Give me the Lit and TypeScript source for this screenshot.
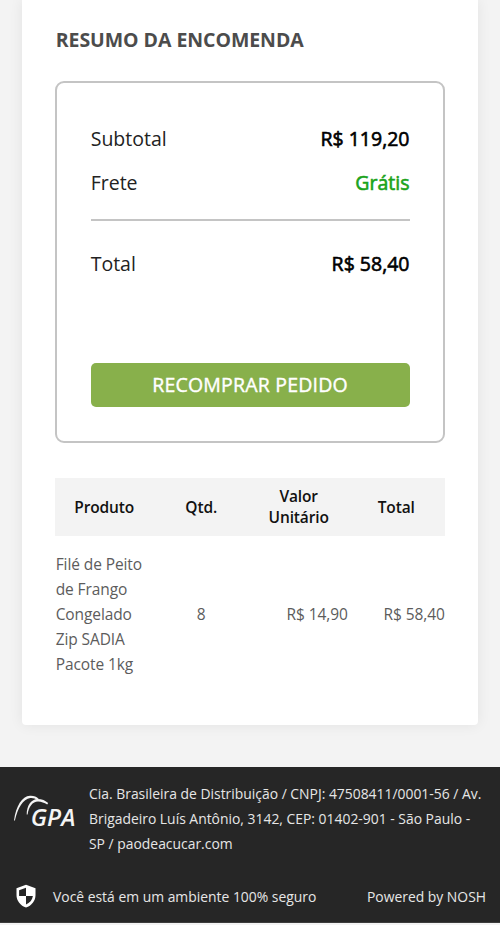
import { LitElement, html, css, svg } from "lit";
import { customElement } from "lit/decorators.js";

const rows = [
  { name: ["Filé de Peito", "de Frango", "Congelado", "Zip SADIA", "Pacote 1kg"], qty: "8", unit: "R$ 14,90", total: "R$ 58,40" },
];

const gpaMark = svg`
  <path d="M0 26.500C2 12 8 2 16 1.700c3.500-.2 6.500.8 8.800 3.200l-1.500 1.300C21.500 4.600 19 3.700 16.300 4 9 4.900 3.800 14 .9 26.500Z"/>
  <path d="M12.700 20.500C12.700 11 17.500 5 23.500 4.900c4.500 0 8 1.500 10.700 4.200l-1 1.500C30.300 8.600 27.500 7.500 24 7.400c-5.500 0-9.300 5.400-10.400 13.100Z"/>
`;

@customElement("order-summary")
export class OrderSummary extends LitElement {
  static styles = css`
    :host { display: block; }
    .box {
      box-sizing: border-box; height: 362px; padding: 33px 33.500px 0 33.700px;
      border: 2px solid #c4c4c4; border-radius: 9px; color: #222; font-size: 19.5px;
    }
    .row { display: flex; justify-content: space-between; align-items: center; height: 44.500px; line-height: 45px; }
    .row:last-of-type { line-height: 44px; }
    .value { color: #000; font-size: 19.500px; -webkit-text-stroke: 0.6px currentColor; }
    .free { color: #1ba31b; }
    .rule { height: 2px; background: #c4c4c4; margin: 14px 0 20.500px; }
    .buy {
      display: block; width: 100%; height: 44px; margin-top: 76.500px; padding: 0; border: 0; border-radius: 5px;
      background: #88b04b; color: #fff; font: 400 19.500px/43px "Open Sans", sans-serif;
      letter-spacing: 0.200px; -webkit-text-stroke: 0.4px #fff;
    }
  `;
  render() {
    return html`<section class="box">
      <div class="row"><span class="label">Subtotal</span><span class="value">R$ 119,20</span></div>
      <div class="row"><span class="label">Frete</span><span class="value free">Grátis</span></div>
      <div class="rule"></div>
      <div class="row"><span class="label">Total</span><span class="value">R$ 58,40</span></div>
      <button class="buy">RECOMPRAR PEDIDO</button>
    </section>`;
  }
}

@customElement("product-table")
export class ProductTable extends LitElement {
  static styles = css`
    :host { display: block; }
    .head, .item { display: grid; grid-template-columns: 97px 97px 98px 97px; align-items: center; }
    .head {
      height: 58px; padding-left: 0.700px; background: #f3f3f3; color: #111; text-align: center;
      font-weight: 600; font-size: 15.500px; line-height: 21px; letter-spacing: -0.120px;
    }
    .item { margin-top: 16px; padding-left: 0.700px; color: #5c5c5c; font-size: 15.500px; line-height: 25px; letter-spacing: -0.100px; }
    .line { display: block; white-space: nowrap; }
    .qty { text-align: center; }
    .money { text-align: right; white-space: nowrap; }
  `;
  render() {
    return html`
      <div class="head"><span>Produto</span><span>Qtd.</span><span>Valor<br />Unitário</span><span>Total</span></div>
      ${rows.map((r) => html`<div class="item">
        <span>${r.name.map((l) => html`<span class="line">${l}</span>`)}</span>
        <span class="qty">${r.qty}</span>
        <span class="money">${r.unit}</span>
        <span class="money">${r.total}</span>
      </div>`)}
    `;
  }
}

@customElement("site-footer")
export class SiteFooter extends LitElement {
  static styles = css`
    :host { display: block; }
    .footer {
      box-sizing: border-box; height: 156px; background: #262626; color: #e6e6e6;
      padding: 14px 14px 0; font-size: 13.900px; line-height: 25px; border-bottom: 1px solid #3c3c3c;
    }
    .company { display: flex; height: 75px; }
    .logo { display: block; flex: none; width: 64px; height: 40px; margin: 13px 11px 0 0; fill: #f4f4f4; }
    .gpa { font: italic 600 24px "Open Sans", sans-serif; }
    .line { display: block; white-space: nowrap; }
    .bottom { display: flex; align-items: center; height: 25px; margin-top: 27.500px; white-space: nowrap; }
    .shield { display: block; width: 20px; height: 24px; margin: 0 17px 0 2px; }
    .powered { margin-left: auto; }
  `;
  render() {
    return html`<footer class="footer">
      <div class="company">
        <svg class="logo" viewBox="0 0 64 40">${gpaMark}<text class="gpa" x="16.800" y="32.300" textLength="44.500" lengthAdjust="spacingAndGlyphs">GPA</text></svg>
        <div>
          <span class="line">Cia. Brasileira de Distribuição / CNPJ: 47508411/0001-56 / Av.</span>
          <span class="line">Brigadeiro Luís Antônio, 3142, CEP: 01402-901 - São Paulo -</span>
          <span class="line">SP / paodeacucar.com</span>
        </div>
      </div>
      <div class="bottom">
        <svg class="shield" viewBox="0 0 20 24">
          <path fill="#fff" d="M10 .7 19.500 4.300V11c0 5.900-4 10.800-9.500 12.500C4.500 21.800.5 16.900.5 11V4.300Z"/>
          <path fill="#262626" d="M10 3.800V12H3.100V6.300Z M10 12h6.900c-.6 4.100-3.200 7-6.900 8.400Z"/>
        </svg>
        <span>Você está em um ambiente 100% seguro</span>
        <span class="powered">Powered by NOSH</span>
      </div>
    </footer>`;
  }
}

@customElement("app-root")
export class AppRoot extends LitElement {
  static styles = css`
    :host { display: block; height: 945px; overflow: hidden; background: #fff; font-family: "Open Sans", sans-serif; }
    .page { box-sizing: border-box; height: 767px; padding: 0 22px; background: #f3f3f3; overflow: hidden; }
    .card {
      box-sizing: border-box; height: 725px; padding: 24px 33px 0; background: #fff;
      border-radius: 0 0 4px 4px; box-shadow: 0 0 14px rgba(0, 0, 0, 0.07);
    }
    .title {
      height: 30px; margin: 0 0 27px; padding-left: 0.700px; color: #4c4c4c;
      font-size: 19.500px; line-height: 31px; font-weight: 700; letter-spacing: -0.050px; white-space: nowrap;
    }
    .products { margin-top: 35px; }
    .edge { height: 2px; background: #f3f3f3; }
  `;
  render() {
    return html`
      <main class="page">
        <div class="card">
          <h1 class="title">RESUMO DA ENCOMENDA</h1>
          <order-summary></order-summary>
          <product-table class="products"></product-table>
        </div>
      </main>
      <site-footer></site-footer>
      <div class="edge"></div>
    `;
  }
}
